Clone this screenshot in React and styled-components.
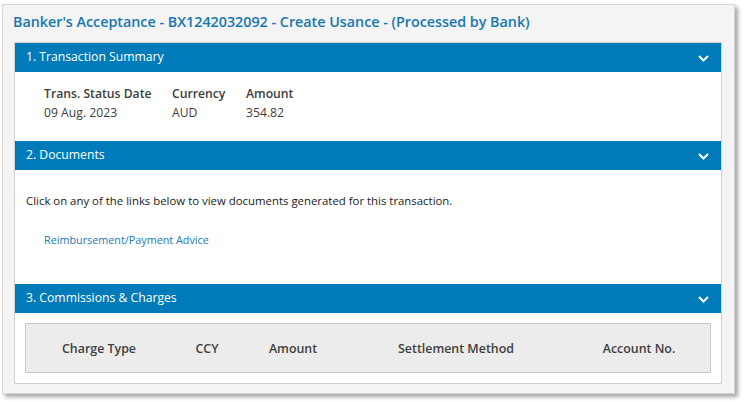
import styled, { createGlobalStyle } from "styled-components";

const GlobalStyle = createGlobalStyle`
  html, body {
    margin: 0;
    padding: 0;
    background: #ffffff;
    font-family: "Open Sans", "Noto Sans", sans-serif;
  }
`;

function Chevron() {
  return (
    <svg width="11" height="7" viewBox="0 0 11 7">
      <path d="M1 1 L5.5 5.5 L10 1" fill="none" stroke="#fff" strokeWidth="2" />
    </svg>
  );
}

function Section({ title, children }) {
  return (
    <StSection>
      <StSectionHeader>
        <span>{title}</span>
        <Chevron />
      </StSectionHeader>
      {children}
    </StSection>
  );
}

const summary = [
  { label: "Trans. Status Date", value: "09 Aug. 2023", width: 128 },
  { label: "Currency", value: "AUD", width: 74 },
  { label: "Amount", value: "354.82", width: 80 },
];

const chargeCols = ["Charge Type", "CCY", "Amount", "Settlement Method", "Account No."];

function App() {
  return (
    <>
      <GlobalStyle />
      <StPage>
        <StFrame>
          <StTitle>
            Banker's Acceptance - BX1242032092 - Create Usance - (Processed by Bank)
          </StTitle>
          <StPanel>
            <Section title="1. Transaction Summary">
              <StSummary>
                {summary.map((item) => (
                  <StField key={item.label} $width={item.width}>
                    <StLabel>{item.label}</StLabel>
                    <StValue>{item.value}</StValue>
                  </StField>
                ))}
              </StSummary>
            </Section>
            <Section title="2. Documents">
              <StDocs>
                <StNote>
                  Click on any of the links below to view documents generated for this transaction.
                </StNote>
                <StLink href="#">Reimbursement/Payment Advice</StLink>
              </StDocs>
            </Section>
            <Section title="3. Commissions &amp; Charges">
              <StChargesBody>
                <StChargeTable>
                  {chargeCols.map((c) => (
                    <StChargeHead key={c}>{c}</StChargeHead>
                  ))}
                </StChargeTable>
              </StChargesBody>
            </Section>
          </StPanel>
        </StFrame>
      </StPage>
    </>
  );
}

export default App;

const StPage = styled.div`
  padding: 4px 12px 8px 2px;
`;

const StFrame = styled.div`
  width: 733px;
  background: #f4f4f4;
  border: 1px solid #d6d6d6;
  box-shadow: 3px 3px 4px rgba(0, 0, 0, 0.35);
  padding: 0 12px 9px 11px;
  box-sizing: border-box;
`;

const StTitle = styled.h1`
  margin: 0 0 0 -1px;
  height: 37px;
  line-height: 34px;
  font-size: 14.3px;
  font-weight: 600;
  color: #1677b3;
  white-space: nowrap;
`;

const StPanel = styled.div`
  background: #fff;
  border: 1px solid #cfcfcf;
`;

const StSection = styled.section``;

const StSectionHeader = styled.div`
  display: flex;
  align-items: center;
  justify-content: space-between;
  height: 29px;
  padding: 0 12px 0 11px;
  background: #007bb9;
  color: #fff;
  font-size: 12.2px;
  font-weight: 500;
  span {
    position: relative;
    top: -1px;
  }
  svg {
    margin-top: 2px;
  }
`;

const StSummary = styled.div`
  display: flex;
  padding: 12px 29px 19px;
  height: 38px;
`;

const StField = styled.div`
  display: flex;
  flex-direction: column;
  width: ${(p) => p.$width}px;
  color: #3d3d3d;
  font-size: 12.2px;
  line-height: 19px;
  white-space: nowrap;
`;

const StLabel = styled.div`
  font-weight: 600;
`;

const StValue = styled.div``;

const StDocs = styled.div`
  display: flex;
  flex-direction: column;
  align-items: flex-start;
  height: 114px;
  padding: 0 11px;
`;

const StNote = styled.p`
  margin: 23px 0 0;
  font-size: 11.4px;
  color: #1a1a1a;
`;

const StLink = styled.a`
  margin: 24px 0 0 18px;
  font-size: 10.8px;
  color: #1a7ab5;
  text-decoration: none;
`;

const StChargesBody = styled.div`
  padding: 10px 10px 10px;
`;

const StChargeTable = styled.div`
  display: grid;
  grid-template-columns: 146px 70px 102px 224px 1fr;
  align-items: center;
  height: 48px;
  background: #ececec;
  border: 1px solid #c8c8c8;
`;

const StChargeHead = styled.div`
  text-align: center;
  font-size: 12.4px;
  font-weight: 600;
  color: #404040;
`;
